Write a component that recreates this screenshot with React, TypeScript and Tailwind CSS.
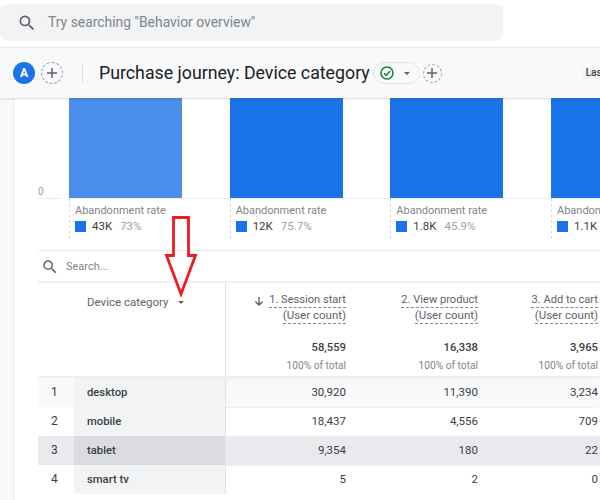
const font = { fontFamily: "Roboto, sans-serif" };

const funnel = [
  { value: "43K", rate: "73%", bar: "bg-[#4a8eea]" },
  { value: "12K", rate: "75.7%", bar: "bg-[#1a73e8]" },
  { value: "1.8K", rate: "45.9%", bar: "bg-[#1a73e8]" },
  { value: "1.1K", rate: "", bar: "bg-[#1a73e8]" },
];

const columns = [
  { step: "1. Session start", total: "58,559", width: "w-[120px]", sorted: true },
  { step: "2. View product", total: "16,338", width: "w-[132px]", sorted: false },
  { step: "3. Add to cart", total: "3,965", width: "w-[120px]", sorted: false },
];

const rows = [
  { name: "desktop", values: ["30,920", "11,390", "3,234"], bg: "bg-[#f8f9fa]", dim: "bg-[#f1f3f4]" },
  { name: "mobile", values: ["18,437", "4,556", "709"], bg: "bg-white", dim: "bg-[#f1f3f4]" },
  { name: "tablet", values: ["9,354", "180", "22"], bg: "bg-[#e8eaed]", dim: "bg-[#dadce0]" },
  { name: "smart tv", values: ["5", "2", "0"], bg: "bg-white", dim: "bg-[#f1f3f4]" },
];

function SearchIcon({ size }: { size: number }) {
  return (
    <svg className="shrink-0" width={size} height={size} viewBox="0 0 24 24" fill="#5f6368">
      <path d="M15.5 14h-.79l-.28-.27A6.47 6.47 0 0 0 16 9.5 6.5 6.5 0 1 0 9.5 16c1.61 0 3.09-.59 4.23-1.57l.27.28v.79l5 4.99L20.49 19l-4.99-5zm-6 0C7.01 14 5 11.99 5 9.5S7.01 5 9.5 5 14 7.01 14 9.5 11.99 14 9.5 14z" />
    </svg>
  );
}

function AddButton({ size }: { size: number }) {
  return (
    <div
      className="flex shrink-0 items-center justify-center rounded-full border border-dashed border-[#9aa0a6]"
      style={{ width: size, height: size }}
    >
      <svg width="14" height="14" viewBox="0 0 14 14" stroke="#5f6368" strokeWidth="1.5">
        <path d="M7 2v10M2 7h10" />
      </svg>
    </div>
  );
}

function Caret() {
  return <div className="h-0 w-0 border-x-[3.5px] border-t-[3.5px] border-x-transparent border-t-[#5f6368]" />;
}

function RedArrow() {
  return (
    <svg className="absolute left-[160px] top-[210px]" width="42" height="90" viewBox="0 0 42 90">
      <path
        d="M13.5 7.5h15v38h7L21 84 6.5 45.500h7z"
        fill="none"
        stroke="#ed1c24"
        strokeWidth="2.800"
      />
    </svg>
  );
}

export default function App() {
  return (
    <div className="relative h-[500px] w-[600px] overflow-hidden bg-white" style={font}>
      {/* Top search */}
      <div className="h-[47px] pt-1">
        <div className="flex h-[37px] w-[503px] items-center rounded-lg bg-[#f1f3f4] pl-[17px]">
          <SearchIcon size={20} />
          <span className="ml-[11px] text-[13.900px] text-[#80868b]">Try searching "Behavior overview"</span>
        </div>
      </div>

      {/* Report header */}
      <div className="relative z-10 flex h-[51px] items-center border-t border-[#e8eaed] bg-[#f8f9fa] pl-[13px] shadow-[0_1px_2px_rgba(60,64,67,0.2)]">
        <div className="flex h-[22px] w-[22px] shrink-0 items-center justify-center rounded-full bg-[#1a73e8] text-[12px] font-bold text-white">A</div>
        <div className="ml-[6px]">
          <AddButton size={22} />
        </div>
        <div className="ml-[19px] h-[18px] w-px shrink-0 bg-[#dadce0]" />
        <h1 className="ml-4 shrink-0 whitespace-nowrap text-[17.75px] leading-6 text-[#202124]">Purchase journey: Device category</h1>
        <div className="ml-[3px] flex h-[22px] w-[47px] shrink-0 items-center rounded-full border border-[#e3e5e8] pl-[6px]">
          <svg className="shrink-0" width="14" height="14" viewBox="0 0 14 14" fill="none" stroke="#188038" strokeWidth="1.500">
            <circle cx="7" cy="7" r="6" />
            <path d="M4 7.200l2.200 2.200L10.200 5" stroke="#188038" />
          </svg>
          <div className="ml-[10px]">
            <Caret />
          </div>
        </div>
        <div className="ml-[3px]">
          <AddButton size={19} />
        </div>
        <div className="ml-[140px] shrink-0 rounded-sm bg-[#f1f3f4] px-1 text-[10px] font-medium leading-[12px] text-[#3c4043]">Last</div>
      </div>

      {/* Body */}
      <div className="flex">
        <div className="h-[402px] w-[14px] shrink-0 border-r border-[#e8eaed] bg-[#f8f9fa]" />
        <div className="ml-6 w-[562px] shrink-0">
          {/* Funnel chart */}
          <div className="flex h-[153px] border-b border-[#e8eaed]">
            <div className="w-[31px] shrink-0">
              <div className="flex h-[101px] flex-col justify-end">
                <span className="text-[10px] leading-3 text-[#9aa0a6]">0</span>
                <div className="h-px w-[23px] bg-[#e8eaed]" />
              </div>
            </div>
            {funnel.map((item) => (
              <div key={item.value} className="w-[160.67px] shrink-0">
                <div className="h-[101px] border-b border-[#eeeff1]">
                  <div className={`h-full w-[113px] ${item.bar}`} />
                </div>
                <div className="h-[40px] w-full border-l border-dashed border-[#dadce0] pl-[5px] pt-[5px]">
                  <div className="text-[11px] leading-[14px] text-[#80868b]">Abandonment rate</div>
                  <div className="flex items-center leading-[16px]">
                    <div className="h-[11px] w-[11px] bg-[#1a73e8]" />
                    <span className="ml-[6px] text-[11.500px] text-[#3c4043]">{item.value}</span>
                    <span className="ml-[8px] text-[11.500px] text-[#9aa0a6]">{item.rate}</span>
                  </div>
                </div>
              </div>
            ))}
          </div>

          {/* Table search */}
          <div className="flex h-[32px] items-center border-b-2 border-[#eeeff1] pl-[3px] pt-[2px]">
            <SearchIcon size={18} />
            <span className="ml-[7px] text-[11px] text-[#80868b]">Search...</span>
          </div>

          {/* Table header */}
          <div className="flex h-[95px] border-b-2 border-[#eeeff1]">
            <div className="flex w-[188px] shrink-0 items-start border-r border-[#e0e2e5] pl-[49px] pt-[12px]">
              <span className="text-[11.500px] leading-[14px] text-[#5f6368]">Device category</span>
              <div className="ml-[9px] mt-[6px]">
                <Caret />
              </div>
            </div>
            {columns.map((col) => (
              <div key={col.step} className={`${col.width} shrink-0 pt-[10px] text-right`}>
                <div className="flex items-center justify-end text-[11.100px] leading-[14px] text-[#5f6368]">
                  {col.sorted && (
                    <svg className="mr-[5px] shrink-0" width="10" height="10" viewBox="0 0 11 11" fill="none" stroke="#5f6368" strokeWidth="1.500">
                      <path d="M5.500 1v8.500M1.500 6l4 4 4-4" />
                    </svg>
                  )}
                  <span className="whitespace-nowrap border-b border-dashed border-[#80868b]">{col.step}</span>
                </div>
                <div className="flex justify-end text-[11.500px] leading-[15px] text-[#5f6368]">
                  <span className="whitespace-nowrap border-b border-dashed border-[#80868b]">(User count)</span>
                </div>
                <div className="mt-[17px] text-[11.250px] font-medium leading-[14px] text-[#3c4043]">{col.total}</div>
                <div className="mt-[4px] text-[10.200px] leading-[14px] text-[#80868b]">100% of total</div>
              </div>
            ))}
          </div>

          {/* Table rows */}
          {rows.map((row, i) => (
            <div key={row.name} className={`flex h-[29px] ${row.bg}`}>
              <div className="w-[36px] shrink-0 pl-[13px] text-[12px] leading-[29px] text-[#3c4043]">{i + 1}</div>
              <div className={`w-[152px] shrink-0 border-r border-[#e0e2e5] pl-[13px] text-[11.250px] font-medium leading-[29px] text-[#3c4043] ${row.dim}`}>
                {row.name}
              </div>
              {columns.map((col, c) => (
                <div key={col.step} className={`${col.width} shrink-0 border-t border-[#eeeff1] text-right text-[11.500px] leading-[27px] text-[#3c4043]`}>
                  {row.values[c]}
                </div>
              ))}
            </div>
          ))}
        </div>
      </div>

      <RedArrow />
    </div>
  );
}
